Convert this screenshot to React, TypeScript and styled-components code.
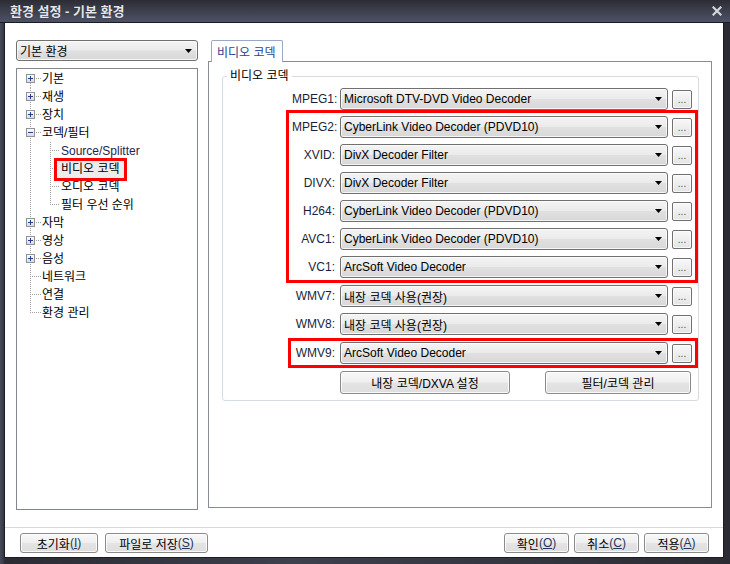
import React from "react";
import styled, { createGlobalStyle } from "styled-components";

const FONT = `"Liberation Sans", "Noto Sans CJK KR", sans-serif`;

const Global = createGlobalStyle`
  html, body { margin: 0; padding: 0; background: #3c3f4c; }
  body { font-family: ${FONT}; font-size: 12px; color: #000; }
  * { box-sizing: border-box; }
`;

const Window = styled.div`
  width: 730px;
  height: 564px;
  display: flex;
  flex-direction: column;
  background: linear-gradient(to right, #474a58 0, #3a3d4a 3px, #2a2b33 5px, #3d404d 40%, #2b2c33 100%);
  overflow: hidden;
`;

const TitleBar = styled.div`
  height: 23px;
  flex: none;
  display: flex;
  align-items: center;
  justify-content: space-between;
  padding: 0 8px 1px 10px;
  background: linear-gradient(#2b2c34 0%, #3a3c48 40%, #4d5165 100%);
  border-bottom: 1px solid #1a1b20;
`;

const Title = styled.span`
  color: #e6e6ea;
  font-weight: bold;
  font-size: 13px;
  text-shadow: 0 0 1px rgba(0, 0, 0, 0.4);
`;

const Client = styled.div`
  flex: 1;
  min-height: 0;
  margin: 0 6px 6px 4px;
  border: 1px solid #1c1d22;
  border-top: none;
  background: #fff;
  display: flex;
  flex-direction: column;
`;

const Main = styled.div`
  flex: 1;
  min-height: 0;
  display: flex;
  gap: 10px;
  padding: 17px 11px 17px 11px;
`;

const LeftColumn = styled.div`
  width: 182px;
  flex: none;
  display: flex;
  flex-direction: column;
  gap: 7px;
`;

const ComboBox = styled.div<{ $width: number; $height: number }>`
  width: ${(p) => p.$width}px;
  height: ${(p) => p.$height}px;
  flex: none;
  display: flex;
  align-items: center;
  justify-content: space-between;
  padding: 0 5px 0 3px;
  border: 1px solid #707070;
  border-radius: 3px;
  background: linear-gradient(#f4f4f4 0%, #ebebeb 48%, #e0e0e0 52%, #d8d8d8 100%);
  box-shadow: inset 0 0 0 1px rgba(255, 255, 255, 0.75);
  white-space: nowrap;
  color: #000;
`;

const ArrowSvg = styled.svg`
  flex: none;
  display: block;
`;

const Tree = styled.div`
  flex: 1;
  border: 1px solid #828790;
  background: #fff;
  display: flex;
  flex-direction: column;
  padding-top: 1px;
`;

const TreeRow = styled.div`
  display: flex;
  align-items: center;
  height: 18px;
  white-space: nowrap;
`;

const TreeText = styled.span<{ $latin?: boolean }>`
  line-height: 18px;
  color: ${(p) => (p.$latin ? "#1c2550" : "#000")};
`;

const SelectedText = styled.span`
  align-self: flex-start;
  margin: 1px 0 0 -4px;
  padding: 0 4px 0 4px;
  height: 17px;
  line-height: 17px;
  background: #ececec;
  outline: 3px solid #ff0000;
`;

const RightColumn = styled.div`
  flex: 1;
  display: flex;
  flex-direction: column;
  padding-bottom: 2px;
`;

const TabStrip = styled.div`
  height: 21px;
  flex: none;
  display: flex;
  align-items: flex-start;
  padding-left: 3px;
`;

const Tab = styled.div`
  position: relative;
  z-index: 1;
  height: 22px;
  padding: 0 6px 0 5px;
  display: flex;
  align-items: center;
  background: #fff;
  border: 1px solid #9ba8c2;
  border-bottom: none;
  border-radius: 2px 2px 0 0;
  color: #2a4391;
`;

const TabPanel = styled.div`
  flex: 1;
  border: 1px solid #898c95;
  padding: 7px 12px 0 13px;
  background: #fff;
`;

const GroupBox = styled.fieldset`
  margin: 0;
  padding: 0;
  min-width: 0;
  border: 1px solid #d4dbe2;
  border-radius: 3px;
`;

const GroupLegend = styled.legend`
  margin-left: 4px;
  padding: 0 3px;
  line-height: 14px;
  font-size: 12px;
`;

const GroupContent = styled.div`
  display: flex;
  flex-direction: column;
  gap: 6px;
  padding: 5px 6px 6px 69px;
`;

const Highlight = styled.div<{ $tight?: boolean }>`
  display: flex;
  flex-direction: column;
  gap: 6px;
  border: 3px solid #ff0000;
  margin: ${(p) => (p.$tight ? "-3px -6px -3px -4px" : "-6px -6px -4px -6px")};
  padding: ${(p) => (p.$tight ? "1px 3px 1px 1px" : "3px 3px 2px 3px")};
`;

const CodecRowBox = styled.div`
  display: flex;
  align-items: center;
  height: 22px;
`;

const CodecLabel = styled.span`
  width: 43px;
  margin-right: 5px;
  text-align: right;
  white-space: nowrap;
  color: #1a1f3a;
`;

const DotsButton = styled.div`
  width: 20px;
  height: 19px;
  margin-left: 4px;
  display: flex;
  align-items: flex-end;
  justify-content: center;
  padding-bottom: 3px;
  font-size: 10px;
  line-height: 10px;
  color: #4a4a5a;
  border: 1px solid #707070;
  border-radius: 2px;
  background: linear-gradient(#f8f8f8, #e4e4e4);
  box-shadow: inset 0 0 0 1px rgba(255, 255, 255, 0.7);
`;

const ActionRow = styled.div`
  display: flex;
  margin-left: 48px;
`;

const PushButton = styled.div<{ $width: number; $height?: number; $gap?: number }>`
  width: ${(p) => p.$width}px;
  height: ${(p) => p.$height ?? 20}px;
  margin-left: ${(p) => p.$gap ?? 0}px;
  flex: none;
  display: flex;
  align-items: center;
  justify-content: center;
  white-space: nowrap;
  border: 1px solid #8b8b8b;
  border-radius: 3px;
  background: linear-gradient(#f8f8f8 0%, #efefef 48%, #e4e4e4 52%, #dedede 100%);
  box-shadow: inset 0 0 0 1px rgba(255, 255, 255, 0.8);
  color: #000;
`;

const Mnemonic = styled.span`
  color: #24365f;
  u { text-decoration: underline; }
`;

const Footer = styled.div`
  height: 30px;
  flex: none;
  display: flex;
  align-items: flex-start;
  padding: 5px 14px 0 15px;
  border-top: 1px solid #d9d9d9;
  background: #fff;
`;

const Spacer = styled.div`
  flex: 1;
`;

function Arrow() {
  return (
    <ArrowSvg width="7" height="4" viewBox="0 0 7 4">
      <path d="M0 0H7L3.5 4Z" fill="#000" />
    </ArrowSvg>
  );
}

function CloseIcon() {
  return (
    <svg width="10" height="10" viewBox="0 0 10 10" style={{ display: "block" }}>
      <path d="M1.5 1.5L8.5 8.5M8.5 1.5L1.5 8.5" stroke="#d4d5da" strokeWidth="2.2" strokeLinecap="square" />
    </svg>
  );
}

type TreeNode = {
  text: string;
  level: 1 | 2;
  kind?: "plus" | "minus" | "leaf";
  first?: boolean;
  last?: boolean;
  latin?: boolean;
  selected?: boolean;
};

const treeNodes: TreeNode[] = [
  { text: "기본", level: 1, kind: "plus", first: true },
  { text: "재생", level: 1, kind: "plus" },
  { text: "장치", level: 1, kind: "plus" },
  { text: "코덱/필터", level: 1, kind: "minus" },
  { text: "Source/Splitter", level: 2, latin: true },
  { text: "비디오 코덱", level: 2, selected: true },
  { text: "오디오 코덱", level: 2 },
  { text: "필터 우선 순위", level: 2, last: true },
  { text: "자막", level: 1, kind: "plus" },
  { text: "영상", level: 1, kind: "plus" },
  { text: "음성", level: 1, kind: "plus" },
  { text: "네트워크", level: 1, kind: "leaf" },
  { text: "연결", level: 1, kind: "leaf" },
  { text: "환경 관리", level: 1, kind: "leaf", last: true },
];

const DOT = { stroke: "#a0a0a0", strokeWidth: 1, strokeDasharray: "1 1", shapeRendering: "crispEdges" as const };

function Connector({ node, idx }: { node: TreeNode; idx: number }) {
  const gid = `g${idx}`;
  if (node.level === 2) {
    return (
      <svg width="44" height="18" viewBox="0 0 44 18" style={{ display: "block", flex: "none" }}>
        <line x1="13.5" y1="0" x2="13.5" y2="18" {...DOT} />
        <line x1="33.5" y1="0" x2="33.5" y2={node.last ? 9 : 18} {...DOT} />
        <line x1="35" y1="8.5" x2="43" y2="8.5" {...DOT} />
      </svg>
    );
  }
  return (
    <svg width="25" height="18" viewBox="0 0 25 18" style={{ display: "block", flex: "none" }}>
      <defs>
        <linearGradient id={gid} x1="0" y1="0" x2="0" y2="1">
          <stop offset="0" stopColor="#ffffff" />
          <stop offset="1" stopColor="#d6d8dc" />
        </linearGradient>
      </defs>
      <line x1="13.5" y1={node.first ? 9 : 0} x2="13.5" y2={node.last ? 9 : 18} {...DOT} />
      <line x1="15" y1="8.5" x2="24" y2="8.5" {...DOT} />
      {node.kind !== "leaf" && (
        <g shapeRendering="crispEdges">
          <rect x="9.5" y="4.5" width="8" height="8" fill={`url(#${gid})`} stroke="#8f9296" />
          <line x1="11" y1="8.5" x2="16" y2="8.5" stroke="#243f8f" />
          {node.kind === "plus" && <line x1="13.5" y1="6" x2="13.5" y2="11" stroke="#243f8f" />}
        </g>
      )}
    </svg>
  );
}

function CodecRow({ label, value }: { label: string; value: string }) {
  return (
    <CodecRowBox>
      <CodecLabel>{label}</CodecLabel>
      <ComboBox $width={328} $height={22}>
        <span>{value}</span>
        <Arrow />
      </ComboBox>
      <DotsButton>...</DotsButton>
    </CodecRowBox>
  );
}

const groupOne: [string, string][] = [
  ["MPEG2:", "CyberLink Video Decoder (PDVD10)"],
  ["XVID:", "DivX Decoder Filter"],
  ["DIVX:", "DivX Decoder Filter"],
  ["H264:", "CyberLink Video Decoder (PDVD10)"],
  ["AVC1:", "CyberLink Video Decoder (PDVD10)"],
  ["VC1:", "ArcSoft Video Decoder"],
];

export default function App() {
  return (
    <>
      <Global />
      <Window>
        <TitleBar>
          <Title>환경 설정 - 기본 환경</Title>
          <CloseIcon />
        </TitleBar>
        <Client>
          <Main>
            <LeftColumn>
              <ComboBox $width={182} $height={21}>
                <span>기본 환경</span>
                <Arrow />
              </ComboBox>
              <Tree>
                {treeNodes.map((n, i) => (
                  <TreeRow key={i}>
                    <Connector node={n} idx={i} />
                    {n.selected ? (
                      <SelectedText>{n.text}</SelectedText>
                    ) : (
                      <TreeText $latin={n.latin}>{n.text}</TreeText>
                    )}
                  </TreeRow>
                ))}
              </Tree>
            </LeftColumn>
            <RightColumn>
              <TabStrip>
                <Tab>비디오 코덱</Tab>
              </TabStrip>
              <TabPanel>
                <GroupBox>
                  <GroupLegend>비디오 코덱</GroupLegend>
                  <GroupContent>
                    <CodecRow label="MPEG1:" value="Microsoft DTV-DVD Video Decoder" />
                    <Highlight>
                      {groupOne.map(([l, v]) => (
                        <CodecRow key={l} label={l} value={v} />
                      ))}
                    </Highlight>
                    <CodecRow label="WMV7:" value="내장 코덱 사용(권장)" />
                    <CodecRow label="WMV8:" value="내장 코덱 사용(권장)" />
                    <Highlight $tight>
                      <CodecRow label="WMV9:" value="ArcSoft Video Decoder" />
                    </Highlight>
                    <ActionRow>
                      <PushButton $width={170} $height={23}>내장 코덱/DXVA 설정</PushButton>
                      <PushButton $width={146} $height={23} $gap={35}>필터/코덱 관리</PushButton>
                    </ActionRow>
                  </GroupContent>
                </GroupBox>
              </TabPanel>
            </RightColumn>
          </Main>
          <Footer>
            <PushButton $width={78}>
              초기화<Mnemonic>(<u>I</u>)</Mnemonic>
            </PushButton>
            <PushButton $width={103} $gap={7}>
              파일로 저장<Mnemonic>(<u>S</u>)</Mnemonic>
            </PushButton>
            <Spacer />
            <PushButton $width={65}>
              확인<Mnemonic>(<u>O</u>)</Mnemonic>
            </PushButton>
            <PushButton $width={65} $gap={5}>
              취소<Mnemonic>(<u>C</u>)</Mnemonic>
            </PushButton>
            <PushButton $width={65} $gap={5}>
              적용<Mnemonic>(<u>A</u>)</Mnemonic>
            </PushButton>
          </Footer>
        </Client>
      </Window>
    </>
  );
}
